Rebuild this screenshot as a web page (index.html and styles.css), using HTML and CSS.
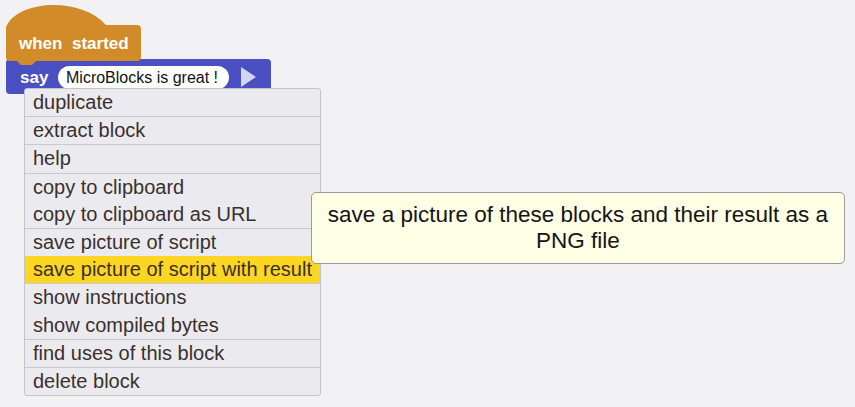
FILE: index.html
```html
<!DOCTYPE html>
<html>
<head>
<meta charset="utf-8">
<link rel="stylesheet" href="styles.css">
</head>
<body>
<div class="canvas">
  <svg class="script" width="280" height="100" viewBox="0 0 280 100">
    <path class="say" d="M6 63 Q6 59 10 59 L267 59 Q271 59 271 63 L271 90 Q271 94 267 94 L10 94 Q6 94 6 90 Z"/>
    <path class="hat" d="M6 27 C18 -1 82 -3 106 25 L137 25 Q141 25 141 29 L141 57 Q141 61 137 61 L36 61 L32 65 L21 65 L17 61 L10 61 Q6 61 6 57 Z"/>
    <text class="btext" x="19" y="49">when</text>
    <text class="btext" x="72" y="49">started</text>
    <text class="btext" x="20" y="83">say</text>
    <rect class="pill" x="58" y="66" width="171" height="23" rx="11.5"/>
    <text class="ptext" x="66" y="83">MicroBlocks is great !</text>
    <polygon class="arrow" points="241,67 256,77 241,87"/>
  </svg>

  <div class="menu">
    <div class="group"><div class="item">duplicate</div></div>
    <div class="group"><div class="item">extract block</div></div>
    <div class="group"><div class="item">help</div></div>
    <div class="group"><div class="item">copy to clipboard</div><div class="item">copy to clipboard as URL</div></div>
    <div class="group"><div class="item">save picture of script</div><div class="item hl">save picture of script with result</div></div>
    <div class="group"><div class="item">show instructions</div><div class="item">show compiled bytes</div></div>
    <div class="group"><div class="item">find uses of this block</div></div>
    <div class="group"><div class="item">delete block</div></div>
  </div>

  <div class="tip">save a picture of these blocks and their result as a<br>PNG file</div>
</div>
</body>
</html>
```

FILE: styles.css
```css
html, body {
  margin: 0;
  padding: 0;
  background: #f2f2f5;
  font-family: "Liberation Sans", Arial, sans-serif;
}
.canvas {
  position: relative;
  width: 855px;
  height: 407px;
  overflow: hidden;
}
.script {
  position: absolute;
  left: 0;
  top: 0;
}
.hat { fill: #d18b29; }
.say { fill: #4a4fc1; }
.btext {
  fill: #ffffff;
  font-family: "Liberation Sans", Arial, sans-serif;
  font-weight: bold;
  font-size: 17px;
}
.pill { fill: #ffffff; }
.ptext {
  fill: #111111;
  font-family: "Liberation Sans", Arial, sans-serif;
  font-size: 16px;
}
.arrow { fill: #d3d5f5; }
.menu {
  position: absolute;
  left: 24px;
  top: 88px;
  width: 295px;
  background: #ebebef;
  border: 1px solid #c3c3cb;
  border-radius: 3px;
  display: flex;
  flex-direction: column;
}
.group {
  border-top: 1px solid #c8c8d2;
}
.group:first-child { border-top: none; }
.item {
  height: 27.2px;
  line-height: 27px;
  padding-left: 8px;
  font-size: 20px;
  color: #3a302c;
  white-space: nowrap;
}
.hl { background: #fdd523; }
.tip {
  position: absolute;
  left: 311px;
  top: 192px;
  width: 534px;
  height: 72px;
  box-sizing: border-box;
  padding-top: 9px;
  background: #ffffe6;
  border: 1px solid #9a9a9a;
  border-radius: 5px;
  text-align: center;
  font-size: 22.5px;
  line-height: 26px;
  color: #151515;
}
```
